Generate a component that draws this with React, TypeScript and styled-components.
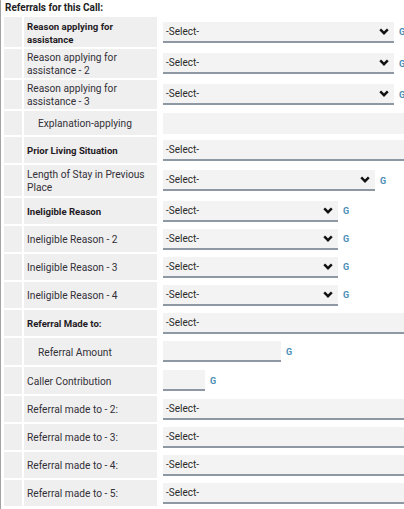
import React from 'react';
import styled, { createGlobalStyle } from 'styled-components';

const GlobalStyle = createGlobalStyle`
  html, body {
    margin: 0;
    padding: 0;
    background: #fff;
    overflow: hidden;
  }
  body {
    font-family: Roboto, "Liberation Sans", Arial, sans-serif;
    color: #2b2b2b;
  }
`;

const Page = styled.div`
  width: 404px;
  height: 509px;
  box-sizing: border-box;
  border-left: 1px solid #a3a3a3;
  overflow: hidden;
`;

const Title = styled.div`
  height: 17px;
  line-height: 16px;
  padding-left: 4px;
  font-size: 10px;
  font-weight: 700;
  color: #222;
`;

const Table = styled.div`
  display: flex;
  flex-direction: column;
  gap: 2px;
  padding-left: 3px;
`;

const Row = styled.div<{ $h: number }>`
  display: grid;
  grid-template-columns: 18px 133px 1fr;
  column-gap: 2px;
  height: ${(p) => p.$h}px;
`;

const Spacer = styled.div`
  background: #efefef;
`;

const Label = styled.div<{ $bold?: boolean; $indent?: boolean }>`
  background: #efefef;
  display: flex;
  align-items: center;
  padding-left: ${(p) => (p.$indent ? 14 : 3)}px;
  padding-right: 4px;
  padding-top: 1px;
  font-size: ${(p) => (p.$bold ? 9.6 : 10.2)}px;
  line-height: 13px;
  font-weight: ${(p) => (p.$bold ? 700 : 400)};
  color: ${(p) => (p.$bold ? '#1f1a24' : '#333038')};
`;

const FieldCell = styled.div`
  display: flex;
  align-items: center;
  padding-left: 4px;
  white-space: nowrap;
  overflow: hidden;
`;

const Box = styled.div<{ $w: number; $line?: boolean }>`
  flex: none;
  width: ${(p) => p.$w}px;
  height: 21px;
  box-sizing: border-box;
  background: #f3f3f3;
  border-bottom: 2px solid ${(p) => (p.$line === false ? 'transparent' : '#8d98a2')};
  display: flex;
  align-items: center;
  justify-content: space-between;
  padding: 0 5px 0 3px;
  font-size: 10px;
  color: #2a2a2a;
`;

const Chevron = styled.svg`
  width: 10px;
  height: 7px;
  flex: none;
`;

const GLink = styled.span`
  margin-left: 5px;
  font-size: 9px;
  font-weight: 700;
  color: #4a8db5;
`;

type Field = {
  label: string;
  bold?: boolean;
  indent?: boolean;
  h: number;
  kind: 'select' | 'input';
  w: number;
  chevron?: boolean;
  g?: boolean;
  line?: boolean;
};

const rows: Field[] = [
  { label: 'Reason applying for assistance', bold: true, h: 30, kind: 'select', w: 231, chevron: true, g: true },
  { label: 'Reason applying for assistance - 2', h: 29, kind: 'select', w: 231, chevron: true, g: true },
  { label: 'Reason applying for assistance - 3', h: 29, kind: 'select', w: 231, chevron: true, g: true },
  { label: 'Explanation-applying', indent: true, h: 24, kind: 'input', w: 260, line: false },
  { label: 'Prior Living Situation', bold: true, h: 26, kind: 'select', w: 260 },
  { label: 'Length of Stay in Previous Place', h: 31, kind: 'select', w: 212, chevron: true, g: true },
  { label: 'Ineligible Reason', bold: true, h: 26, kind: 'select', w: 175, chevron: true, g: true },
  { label: 'Ineligible Reason - 2', h: 26, kind: 'select', w: 175, chevron: true, g: true },
  { label: 'Ineligible Reason - 3', h: 26, kind: 'select', w: 175, chevron: true, g: true },
  { label: 'Ineligible Reason - 4', h: 26, kind: 'select', w: 175, chevron: true, g: true },
  { label: 'Referral Made to:', bold: true, h: 26, kind: 'select', w: 260 },
  { label: 'Referral Amount', indent: true, h: 27, kind: 'input', w: 118, g: true },
  { label: 'Caller Contribution', h: 27, kind: 'input', w: 42, g: true },
  { label: 'Referral made to - 2:', h: 26, kind: 'select', w: 260 },
  { label: 'Referral made to - 3:', h: 26, kind: 'select', w: 260 },
  { label: 'Referral made to - 4:', h: 26, kind: 'select', w: 260 },
  { label: 'Referral made to - 5:', h: 26, kind: 'select', w: 260 },
];

const ChevronDown = () => (
  <Chevron viewBox="0 0 10 7">
    <polyline points="1.2,1.3 5,5.2 8.8,1.3" fill="none" stroke="#111" strokeWidth="2.4" />
  </Chevron>
);

const App: React.FC = () => {
  return (
    <Page>
      <GlobalStyle />
      <Title>Referrals for this Call:</Title>
      <Table>
        {rows.map((r) => (
          <Row key={r.label} $h={r.h}>
            <Spacer />
            <Label $bold={r.bold} $indent={r.indent}>{r.label}</Label>
            <FieldCell>
              <Box $w={r.w} $line={r.line}>
                <span>{r.kind === 'select' ? '-Select-' : ''}</span>
                {r.chevron && <ChevronDown />}
              </Box>
              {r.g && <GLink>G</GLink>}
            </FieldCell>
          </Row>
        ))}
      </Table>
    </Page>
  );
};

export default App;
